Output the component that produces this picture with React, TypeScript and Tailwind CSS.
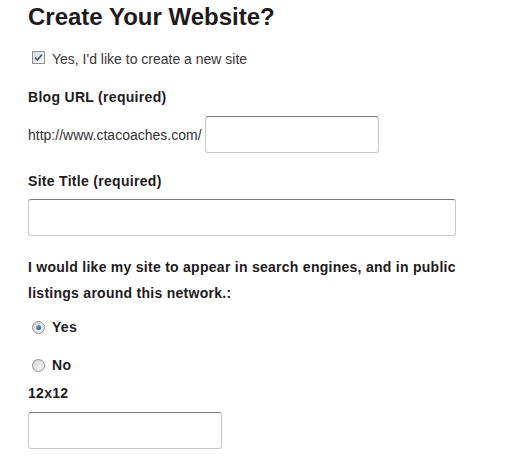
import React from "react";

const Checkbox: React.FC = () => (
  <span className="mt-[2px] flex h-[13px] w-[13px] shrink-0 items-center justify-center border border-[#8e8f8f] bg-gradient-to-br from-[#dcdcdc] to-[#fbfbfb]">
    <svg width="9" height="9" viewBox="0 0 9 9">
      <path d="M1 4.5 L3.5 7 L8 1.5" fill="none" stroke="#4d6185" strokeWidth="1.8" />
    </svg>
  </span>
);

const Radio: React.FC<{ checked?: boolean }> = ({ checked }) => (
  <span className="flex h-[13px] w-[13px] shrink-0 items-center justify-center rounded-full border border-[#8e8f8f] bg-gradient-to-br from-[#d4d4d4] to-[#fafafa]">
    {checked && (
      <span className="h-[5px] w-[5px] rounded-full bg-gradient-to-br from-[#7fb3db] to-[#1c4f7e]" />
    )}
  </span>
);

const Field: React.FC<{ className: string }> = ({ className }) => (
  <input
    type="text"
    className={`h-[37px] rounded-[3px] border border-[#c9c9c9] border-t-[#7d7d7d] bg-white outline-none ${className}`}
  />
);

export default function App() {
  return (
    <div className="min-h-[474px] bg-white pl-[28px] font-['Liberation_Sans',Arial,sans-serif] text-[14px] text-[#1f1a1c]">
      <h1 className="pt-[3px] text-[24px] font-bold leading-[28px]">
        Create Your Website?
      </h1>

      <label className="mt-[18px] flex gap-[7px] pl-[4px] leading-[20px] text-[#3a3538]">
        <Checkbox />
        <span>Yes, I'd like to create a new site</span>
      </label>

      <div className="mt-[18px] font-bold leading-[20px] tracking-[0.3px]">
        Blog URL (required)
      </div>

      <div className="mt-[9px] flex items-center gap-[3px]">
        <span className="leading-[20px] text-[#333]">
          http://www.ctacoaches.com/
        </span>
        <Field className="w-[174px]" />
      </div>

      <div className="mt-[18px] font-bold leading-[20px] tracking-[0.3px]">
        Site Title (required)
      </div>
      <Field className="mt-[8px] block w-[428px]" />

      <p className="mt-[18px] w-[440px] font-bold leading-[26px] tracking-[0.27px]">
        I would like my site to appear in search engines, and in public
        listings around this network.:
      </p>

      <label className="mt-[11px] flex items-center gap-[7px] pl-[4px] font-bold leading-[20px] tracking-[0.3px]">
        <Radio checked />
        <span>Yes</span>
      </label>

      <label className="mt-[18px] flex items-center gap-[7px] pl-[4px] font-bold leading-[20px] tracking-[0.3px]">
        <Radio />
        <span>No</span>
      </label>

      <div className="mt-[8px] font-bold leading-[20px] tracking-[0.3px]">
        12x12
      </div>
      <Field className="mt-[9px] block w-[194px]" />
    </div>
  );
}
